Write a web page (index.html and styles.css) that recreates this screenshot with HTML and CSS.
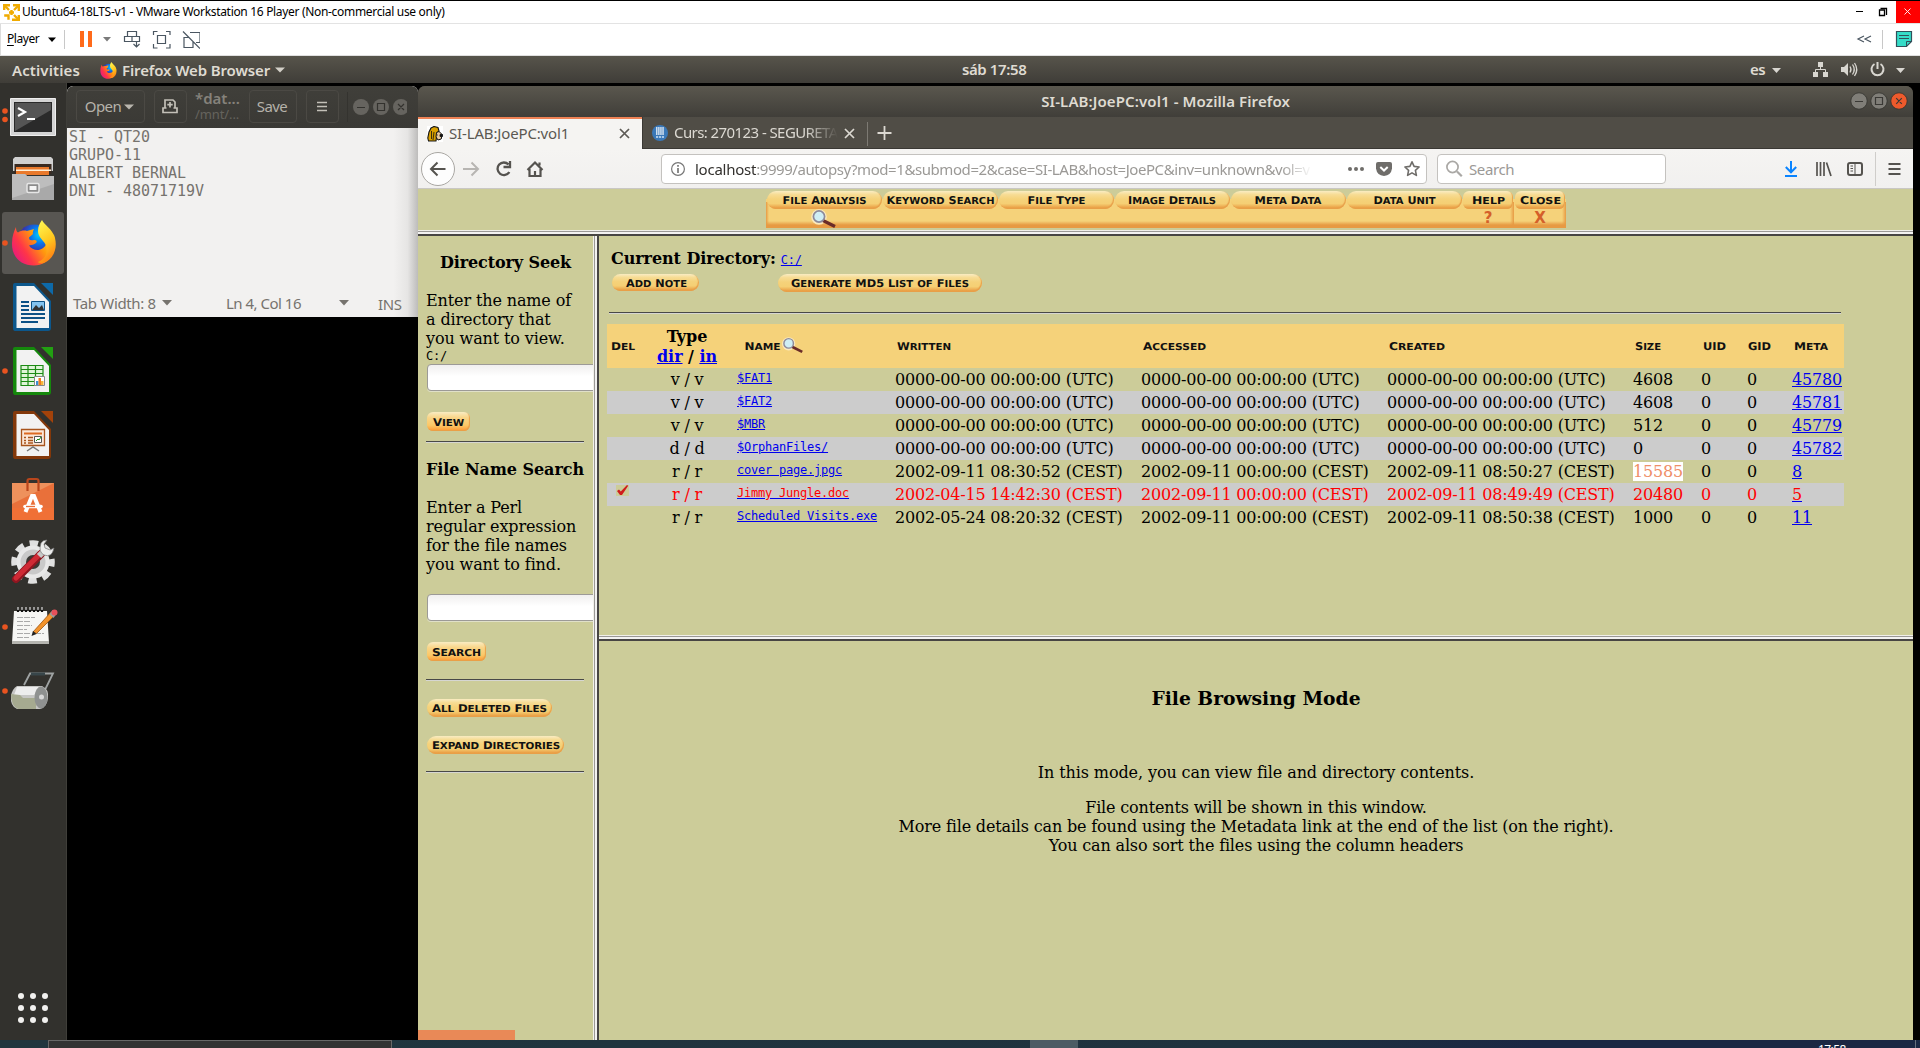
FILE: index.html
```html
<!DOCTYPE html>
<html lang="en">
<head>
<meta charset="utf-8">
<title>Ubuntu64-18LTS-v1 - VMware Workstation 16 Player</title>
<link rel="stylesheet" href="styles.css">
</head>
<body>
<div class="host">
  <header class="vm-title">
    <svg class="vm-logo" width="17" height="17" viewBox="0 0 17 17"><g fill="none" stroke="#f0ab00" stroke-width="2.4"><path d="M1.2 6V1.2H7M10 1.2h5.8V7M15.800 11v4.800H9M5.500 15.800V11.500H1.200"/><path d="M2 2l4 4M15 2l-4 4M15 15l-4-4"/><path d="M6 8.500h2.500V6M11 8.500H8.500V11"/></g></svg>
    <span class="vm-name">Ubuntu64-18LTS-v1 - VMware Workstation 16 Player (Non-commercial use only)</span>
    <span class="vm-controls">
      <svg width="64" height="22" viewBox="-8 0 64 22"><path d="M16 10.500h7" stroke="#000"/><path d="M39.500 9h5v5.500h-5z" fill="none" stroke="#000" stroke-width="1.300"/><path d="M40.500 7.500h6V14" fill="none" stroke="#000" stroke-width="1.300"/></svg>
      <svg class="vm-close" width="24" height="22" viewBox="0 0 24 22"><path d="M8.500 7.500l6 6M14.500 7.500l-6 6" stroke="#fff" stroke-width=".9"/></svg>
    </span>
  </header>
  <div class="vm-bar">
    <span class="vm-player"><u>P</u>layer</span>
    <svg width="152" height="32" viewBox="0 0 152 32">
      <path d="M0 13.500h8l-4 4.500z" fill="#000"/><path d="M16.500 6v19" stroke="#c8c8c8"/>
      <path d="M32 7h4v16h-4zM40 7h4v16h-4z" fill="#ff6a1a"/><path d="M55 13h8l-4 4.500z" fill="#7a7a7a"/>
      <g fill="none" stroke="#4a5661" stroke-width="1.200"><path d="M79.500 7.500h9v5h-9zM76.500 12.500h15v5h-15zM84 12.500v5M88.500 17v6M85.500 20l3 3 3-3"/><path d="M105.500 11V7.500h4M118 7.500h4V11M122 20v4h-4M109.500 24h-4v-4M109.500 11.500h8v8h-8z" /><path d="M142 8.500h10v10h-4M141 13.500h-5v10h9v-6M135 7.500l17 17"/></g>
    </svg>
    <svg class="vm-right" width="70" height="32" viewBox="0 0 70 32"><path d="M14 12l-6 3 6 3M21 12l-6 3 6 3" fill="none" stroke="#4a5661" stroke-width="1.200"/><path d="M32.500 6v19" stroke="#c8c8c8"/><path d="M46.500 7.500h15v10l-5 5h-10z" fill="#35dcc8" stroke="#31505a" stroke-width="1.200"/><path d="M56.500 22.500v-5h5M49 11.500h10M49 14.500h10" fill="none" stroke="#31505a"/></svg>
  </div>

  <div class="panel">
    <div class="panel-left">
      <span class="activities">Activities</span>
      <svg width="17" height="17" viewBox="0 0 46 46"><use href="#fox"/></svg>
      <span class="app-name">Firefox Web Browser</span>
      <svg width="10" height="6" viewBox="0 0 10 6"><path d="M0 .5h10L5 5.500z" fill="#d3d0c8"/></svg>
    </div>
    <span class="clock">sáb 17:58</span>
    <div class="panel-right">
      <span class="lang">es</span>
      <svg width="153" height="28" viewBox="0 0 153 28">
        <g fill="#d8d6d0"><path d="M5 12h9l-4.500 5zM129 12h9l-4.500 5z"/><path d="M51 6h5v5h-5zM46 16h5v5h-5zM56 16h5v5h-5z"/><path d="M74 11h3l4-4v13l-4-4h-3z"/></g>
        <g fill="none" stroke="#d8d6d0"><path d="M53.500 11v3M48.500 16v-2.500h10V16"/><path d="M83 10.500q2 3 0 6M85.500 8.500q3.500 5 0 10M87.500 7q4.500 6.500 0 13" stroke-width="1.300"/><path d="M107.500 8a6 6 0 1 0 6 0M110.500 6v7" stroke-width="2"/></g>
      </svg>
    </div>
  </div>

  <main class="desktop">
    <nav class="dock">
      <svg width="67" height="64" viewBox="0 85 67 64"><g fill="#e95420"><circle cx="5" cy="111" r="2.800"/><circle cx="5" cy="119.500" r="2.800"/></g><path d="M10.500 98.500h45v37h-45z" fill="#d4d4d4" stroke="#efefef"/><path d="M14 102h38v30H14z" fill="#2a2a2a"/><path d="M15 103h36v7L15 131z" fill="#555"/><path d="M18 108l7 4-7 4" fill="none" stroke="#fff" stroke-width="2.200"/><path d="M27 119h8" stroke="#fff" stroke-width="2"/></svg>
      <svg width="67" height="62" viewBox="0 149 67 62"><path d="M13 159l2-2h36l2 2v12H13z" fill="#d0d0d0"/><path d="M14.500 164h37v10h-37z" fill="#3a2a20"/><path d="M16 167h33v8H16z" fill="#e9792b"/><path d="M16 169.500h35v1.600H16z" fill="#fff0d8"/><path d="M12 174h13l2 2h27v24H12z" fill="#a9a9a9"/><path d="M12 174h13l2 2h27v8L12 198z" fill="#bdbdbd"/><rect x="27" y="183.500" width="12" height="9" rx="1.500" fill="#8b8b8b" stroke="#e6e6e6" stroke-width="1.500"/><path d="M29.500 186h7v4h-7z" fill="#f5f5f5"/></svg>
      <svg width="67" height="64" viewBox="0 211 67 64"><rect x="2" y="212" width="62" height="62" rx="3" fill="#585652"/><circle cx="5" cy="243" r="2.800" fill="#e95420"/>
        <defs>
          <linearGradient id="fx" x1="0" y1=".8" x2="1" y2=".2"><stop offset="0" stop-color="#e31587"/><stop offset=".3" stop-color="#ff3647"/><stop offset=".62" stop-color="#ff980e"/><stop offset="1" stop-color="#ffe226"/></linearGradient>
          <radialGradient id="fg" cx=".65" cy=".3"><stop offset="0" stop-color="#00ccff"/><stop offset=".5" stop-color="#0a74e8"/><stop offset="1" stop-color="#3a2ea8"/></radialGradient>
          <linearGradient id="fy" x1=".3" y1="0" x2=".6" y2="1"><stop offset="0" stop-color="#fff44f"/><stop offset=".5" stop-color="#ffc81f"/><stop offset="1" stop-color="#ff7a12"/></linearGradient>
          <g id="fox"><circle cx="23" cy="22" r="17.500" fill="url(#fg)"/><path d="M5 7c0 3 .5 4.500 2 5.500 3-2 6-2.500 9-1.500l7-2c-1 2-1.500 3.500-1 5l-4 3.500c0 3 2 3 5 2.500 2.500-.5 3.500 1.500 2 3-2 2-4 1.500-7 2.500 4 6 14 7 18-3 2 0 4-6 7-8 3 18-6 31-20 31S.5 36 1 23C1.200 16 3 11 5 7z" fill="url(#fx)"/><path d="M31 0c2 5 10 8 13 18 3 12-3 22-11 25-4 1-6-1-6-1 8-3 10-10 8-16-1-5-8-8-8-15 0-5 2-8 4-11z" fill="url(#fy)"/></g>
        </defs>
        <g transform="translate(11 220)"><use href="#fox"/></g></svg>
      <svg width="67" height="64" viewBox="0 275 67 64"><path d="M15 283h19l17 18v27q0 3-3 3H15q-2 0-2-3v-43q0-2 2-2z" fill="#0c578c"/><path d="M16.500 286H34l15 16v26H16.500z" fill="#f2f2f2"/><path d="M41 283h12v12z" fill="#0e69a8"/><path d="M21 302h8M21 306h8M21 310h8M21 314h24M21 318h24M21 322h17" stroke="#0c5186" stroke-width="1.800"/><path d="M31.500 301.500h13v9h-13z" fill="#83c3ef" stroke="#0c5186"/><path d="M32 310l4-5 3 3 3-3 2 5z" fill="#333"/></svg>
      <svg width="67" height="64" viewBox="0 339 67 64"><circle cx="5" cy="371" r="2.800" fill="#e95420"/><path d="M15 347h19l17 18v27q0 3-3 3H15q-2 0-2-3v-43q0-2 2-2z" fill="#15880c"/><path d="M16.500 350H34l15 16v26H16.500z" fill="#f2f2f2"/><path d="M41 347h12v12z" fill="#22a012"/><path d="M21 365.500h22v20H21z" fill="#dff5d8" stroke="#1c8b14" stroke-width="1.200"/><path d="M21 369.500h22M21 373.500h22M21 377.500h22M21 381.500h22M28 365v20M35.500 365v20" stroke="#1c8b14" stroke-width="1.200"/><path d="M34.500 376.500h10v9h-10z" fill="#fff" stroke="#888"/><path d="M36 381h2.500v4H36z" fill="#3b8fd0"/><path d="M38.500 378h2.500v7h-2.500z" fill="#f07c1c"/><path d="M41 381h2.500v4H41z" fill="#f6b73c"/></svg>
      <svg width="67" height="64" viewBox="0 403 67 64"><path d="M15 411h19l17 18v27q0 3-3 3H15q-2 0-2-3v-43q0-2 2-2z" fill="#83380a"/><path d="M16.500 414H34l15 16v26H16.500z" fill="#f2f2f2"/><path d="M41 411h12v12z" fill="#a3420a"/><path d="M21.500 429.500h23v16h-23z" fill="#fbe7d8" stroke="#a8541c" stroke-width="1.300"/><path d="M24 433.500h18" stroke="#dc6a22" stroke-width="2"/><path d="M24 437.500h2M24 440.500h2M24 443h2M28 437.500h5M28 440.500h5M28 443h5" stroke="#a8541c" stroke-width="1.500"/><path d="M34.500 436.500h7v6h-7z" fill="#fff" stroke="#555"/><path d="M36 441l2-2 1 1 2-3" fill="none" stroke="#1c8b14"/><path d="M27 451l6-4 6 4" fill="none" stroke="#777" stroke-width="1.500"/></svg>
      <svg width="67" height="64" viewBox="0 467 67 64"><path d="M12 483h42v37H12z" fill="#e9703a"/><path d="M12 483h42l-42 21z" fill="#ee915c"/><path d="M12 508h42v12H12z" fill="#f07036"/><path d="M27.500 491v-10q0-2 2-2h7q2 0 2 2v10" fill="none" stroke="#b9461c" stroke-width="2.200"/><path d="M25.500 512l6.500-16h2l6.500 16" fill="none" stroke="#fff" stroke-width="4"/><path d="M25 506.500h16" stroke="#fff" stroke-width="3.600" stroke-linecap="round"/><path d="M26 506.500h9" stroke="#e9703a" stroke-width="1.300"/></svg>
      <svg width="67" height="64" viewBox="0 531 67 64"><circle cx="33" cy="562" r="15.500" fill="#c9c9c9"/><circle cx="33" cy="562" r="18.800" fill="none" stroke="#e0e0e0" stroke-width="6" stroke-dasharray="8.500 6.270" stroke-dashoffset="4"/><circle cx="33" cy="562" r="14.500" fill="none" stroke="#e8e8e8" stroke-width="4"/><circle cx="33" cy="562" r="7" fill="#3a3935"/><path d="M16 579l25-25" stroke="#8e1620" stroke-width="8" stroke-linecap="round"/><path d="M16 578l24-24" stroke="#cf2a35" stroke-width="5" stroke-linecap="round"/><path d="M39 556l6-6" stroke="#c8c8c8" stroke-width="6"/><path d="M41 543q-3 9 3 12 8 3 10-7l-4 2-5-2-1-4 3-4q-4 0-6 3z" fill="#ececec" stroke="#777" stroke-width=".7"/></svg>
      <svg width="67" height="64" viewBox="0 595 67 64"><circle cx="5" cy="627" r="2.800" fill="#e95420"/><path d="M14 611h33l2 32H12z" fill="#f6f6f4"/><path d="M12 641h37v3H12z" fill="#b5b5b0"/><path d="M18 612v-3M22 612v-3M26 612v-3M30 612v-3M34 612v-3M38 612v-3M42 612v-3" stroke="#111" stroke-width="2.200"/><path d="M18 610v-3M22 610v-3M26 610v-3M30 610v-3M34 610v-3M38 610v-3M42 610v-3" stroke="#ddd" stroke-width="1.200"/><path d="M17 617.500h18M17 621.500h14M17 625.500h15M17 629.500h10M17 633.500h14M35 633.500h9M17 637.500h12" stroke="#a9a9a9" stroke-dasharray="6 1"/><path d="M33 632l18-20 3.500 3.500-18 18z" fill="#f2932c" stroke="#9c5410" stroke-width=".8"/><path d="M31.500 636l1.500-5 3.500 3z" fill="#222"/><path d="M49.500 614l3-4 4 4-3 4z" fill="#9b9b9b"/><circle cx="54.500" cy="612.500" r="3" fill="#e8505a"/></svg>
      <svg width="67" height="64" viewBox="0 659 67 64"><circle cx="5" cy="691" r="2.800" fill="#e95420"/><path d="M24 685l6-11.500h23L42 696" fill="none" stroke="#9fa3a3" stroke-width="1.800"/><path d="M31 674h14" stroke="#38464a" stroke-width="3"/><path d="M17 686h25q7 3 6 12t-8 11H17q-7-3-6-13 1-7 6-10z" fill="#c6c6c4"/><path d="M17 687h24l-7 8H14z" fill="#ededed"/><path d="M11 694l9 1 3 3h13v11H18q-7-3-7-15z" fill="#a6aa90"/><ellipse cx="41" cy="697.500" rx="6.500" ry="11" fill="#8f9190"/><circle cx="41.500" cy="697" r="2.500" fill="#d8d8d8"/></svg>
      <svg class="apps" width="67" height="40" viewBox="0 988 67 40"><g fill="#f2f1ef"><circle cx="21" cy="996" r="3"/><circle cx="33" cy="996" r="3"/><circle cx="45" cy="996" r="3"/><circle cx="21" cy="1008" r="3"/><circle cx="33" cy="1008" r="3"/><circle cx="45" cy="1008" r="3"/><circle cx="21" cy="1020" r="3"/><circle cx="33" cy="1020" r="3"/><circle cx="45" cy="1020" r="3"/></g></svg>
    </nav>

    <section class="gedit">
      <header class="gedit-head">
        <span class="gbtn g-open"><span>Open</span> <svg width="10" height="6" viewBox="0 0 10 6"><path d="M0 .5h10L5 5.500z" fill="#b9b6ae"/></svg></span>
        <span class="gbtn g-new"><svg width="16" height="15" viewBox="0 0 16 15"><g fill="none" stroke="#c3c0b8" stroke-width="1.700"><path d="M3 9V1h8l2 2v6M4.500 9H1v4.500h14V9h-3.500M8 3v5.500M5.300 5.700h5.400"/></g></svg></span>
        <span class="g-title"><b>*dat...</b><small>/mnt/...</small></span>
        <span class="gbtn g-save"><span>Save</span></span>
        <span class="gbtn g-menu"><svg width="10" height="11" viewBox="0 0 10 11"><path d="M0 1.500h10M0 5.500h10M0 9.500h10" stroke="#c3c0b8" stroke-width="1.700"/></svg></span>
        <svg class="g-controls" width="62" height="34" viewBox="0 0 62 34"><path d="M2.500 2v30" stroke="#34332f"/><g fill="#66645f"><circle cx="16" cy="17" r="8"/><circle cx="36" cy="17" r="8"/><circle cx="56" cy="17" r="8"/></g><path d="M12 17.500h8M32.500 13.500h7v7h-7zM53 14l6 6M59 14l-6 6" fill="none" stroke="#33322e" stroke-width="1.200"/></svg>
      </header>
      <pre class="gedit-text">SI - QT20
GRUPO-11
ALBERT BERNAL
DNI - 48071719V</pre>
      <footer class="gedit-status">
        <span class="s-tab">Tab Width: 8</span>
        <svg class="s-a1" width="10" height="6" viewBox="0 0 10 6"><path d="M0 0h10L5 5.500z" fill="#76736e"/></svg>
        <span class="s-ln">Ln 4, Col 16</span>
        <svg class="s-a2" width="10" height="6" viewBox="0 0 10 6"><path d="M0 0h10L5 5.500z" fill="#76736e"/></svg>
        <span class="s-ins">INS</span>
      </footer>
    </section>

    <section class="firefox">
      <header class="ff-title"><span>SI-LAB:JoePC:vol1 - Mozilla Firefox</span>
        <svg class="ff-controls" width="62" height="20" viewBox="0 0 62 20"><g fill="#807e78" stroke="#34332f" stroke-width=".8"><circle cx="10" cy="10" r="8.200"/><circle cx="30" cy="10" r="8.200"/><circle cx="50" cy="10" r="8.200" fill="#ee5a2c"/></g><path d="M6 10.500h8M26.500 6.500h7v7h-7zM47.200 7.200l5.600 5.600M52.800 7.200l-5.600 5.600" fill="none" stroke="#3a3935" stroke-width="1.200"/></svg>
      </header>
      <div class="ff-tabs">
        <div class="tab active">
          <svg width="16" height="16" viewBox="0 0 16 16"><path d="M0 0h16v16H0z" fill="#fff"/><path d="M4 2l3-1.500 4 1L12 5l-2 2-1 8H1.500L.8 12 2 6z" fill="#d9a000" stroke="#111" stroke-width="1.100"/><path d="M9.500 6.500L12 5.500l3.200 3-1 4.500-3.200 1-2-3z" fill="#e8c9a0" stroke="#111"/><path d="M4.500 5v8M7 6l-1 8M10 9h.8M13 8.500h2.500v2H13z" fill="#111" stroke="#111" stroke-width=".8"/></svg>
          <span class="tab-label">SI-LAB:JoePC:vol1</span>
          <svg width="11" height="11" viewBox="0 0 11 11"><path d="M1 1l9 9M10 1l-9 9" stroke="#5d5a55" stroke-width="1.700"/></svg>
        </div>
        <div class="tab other">
          <svg width="16" height="16" viewBox="0 0 16 16"><circle cx="8" cy="8" r="8" fill="#3a78b8"/><path d="M4 3h8M4 5h8M4 7h8M4 9h8" stroke="#fff" stroke-width="1.500" stroke-dasharray="1.500 .6"/><path d="M4 12h8" stroke="#a8c8e8" stroke-width="2" stroke-dasharray="2.200 .8"/></svg>
          <span class="tab-label">Curs: 270123 - SEGURETA</span>
          <svg width="11" height="11" viewBox="0 0 11 11"><path d="M1 1l9 9M10 1l-9 9" stroke="#dcd9d2" stroke-width="1.700"/></svg>
        </div>
        <svg class="tab-new" width="40" height="32" viewBox="0 0 40 32"><path d="M6.500 5v24" stroke="#7d7a73"/><path d="M23.500 9v14M16.500 16h14" stroke="#dcd9d2" stroke-width="1.800"/></svg>
      </div>
      <div class="ff-bar">
        <svg class="ff-nav" width="143" height="40" viewBox="0 0 143 40"><circle cx="20" cy="20" r="16.500" fill="#fdfdfd" stroke="#a9a7a3"/><g fill="none" stroke-width="2"><path d="M27.500 20H13M19.500 13.500L13 20l6.500 6.500" stroke="#55534f"/><path d="M45 20h15M53.500 13.500L60 20l-6.500 6.500" stroke="#b7b5b2"/><path d="M90.500 15.500a6.300 6.300 0 1 0 .8 7.500M92 12v6h-6.500" stroke="#55534f" stroke-width="2.300"/><path d="M109.500 21l7.500-7.500 7.500 7.500M111.500 20v7h11v-7M117 22v5M121.500 13.500v3" stroke="#55534f" stroke-width="2.200"/></g></svg>
        <div class="url">
          <svg width="14" height="14" viewBox="0 0 14 14"><circle cx="7" cy="7" r="6.400" fill="none" stroke="#777" stroke-width="1.200"/><path d="M7 6v5M7 3v1.700" stroke="#777" stroke-width="1.700"/></svg>
          <span class="url-text"><b>localhost</b><i>:9999/autopsy?mod=1&amp;submod=2&amp;case=SI-LAB&amp;host=JoePC&amp;inv=unknown&amp;vol=v</i></span>
          <svg class="url-icons" width="78" height="20" viewBox="0 0 78 20"><g fill="#6f6d6a"><circle cx="6" cy="10" r="2"/><circle cx="12" cy="10" r="2"/><circle cx="18" cy="10" r="2"/><path d="M34 3h12q2 0 2 2v4.500q-1 7-8 7.500-7-.5-8-7.500V5q0-2 2-2z"/></g><path d="M36.300 8l3.700 3.500L43.700 8" fill="none" stroke="#fff" stroke-width="2"/><path d="M68 2.800l2.100 4.600 5 .6-3.700 3.400 1 5-4.400-2.500-4.400 2.500 1-5L60.900 8l5-.6z" fill="none" stroke="#6f6d6a" stroke-width="1.600" stroke-linejoin="round"/></svg>
        </div>
        <div class="search"><svg width="18" height="18" viewBox="0 0 18 18"><path d="M12 11.500l4.800 4.800" stroke="#aaa8a5" stroke-width="2.200"/><circle cx="7.500" cy="7" r="5.600" fill="none" stroke="#aaa8a5" stroke-width="1.700"/></svg><span>Search</span></div>
        <svg class="ff-tools" width="130" height="40" viewBox="0 0 130 40"><path d="M8 12v11M2.800 18l5.200 5.300 5.200-5.300M2 27h12" fill="none" stroke="#0a84ff" stroke-width="2"/><path d="M34 13v14M37.500 13v14M41 13v14M43.500 13.500L48 27" fill="none" stroke="#55534f" stroke-width="1.700"/><rect x="65" y="14" width="14" height="12" rx="2" fill="none" stroke="#55534f" stroke-width="2"/><path d="M72 14v12M67.500 17h2.500M67.500 19.500h2.500M67.500 22h2.500" stroke="#55534f"/><path d="M92.500 3v34" stroke="#cfcdca"/><path d="M105.500 15h12M105.500 20h12M105.500 25h12" stroke="#55534f" stroke-width="1.900"/></svg>
      </div>

      <div class="page">
        <div class="top-frame">
          <div class="mode-bar">
            <div class="mode"><svg class="pill" width="115" height="18"><text x="15.500" y="13" textLength="84" lengthAdjust="spacingAndGlyphs">F<tspan>ILE</tspan> A<tspan>NALYSIS</tspan></text></svg><svg class="glass" width="28" height="19" viewBox="0 0 28 19"><use href="#lens"/></svg></div>
            <div class="mode"><svg class="pill" width="115" height="18"><text x="3.500" y="13" textLength="108" lengthAdjust="spacingAndGlyphs">K<tspan>EYWORD</tspan> S<tspan>EARCH</tspan></text></svg></div>
            <div class="mode"><svg class="pill" width="115" height="18"><text x="28.500" y="13" textLength="58" lengthAdjust="spacingAndGlyphs">F<tspan>ILE</tspan> T<tspan>YPE</tspan></text></svg></div>
            <div class="mode"><svg class="pill" width="115" height="18"><text x="13" y="13" textLength="88" lengthAdjust="spacingAndGlyphs">I<tspan>MAGE</tspan> D<tspan>ETAILS</tspan></text></svg></div>
            <div class="mode"><svg class="pill" width="115" height="18"><text x="23.500" y="13" textLength="67" lengthAdjust="spacingAndGlyphs">M<tspan>ETA</tspan> D<tspan>ATA</tspan></text></svg></div>
            <div class="mode"><svg class="pill" width="115" height="18"><text x="26.500" y="13" textLength="62" lengthAdjust="spacingAndGlyphs">D<tspan>ATA</tspan> U<tspan>NIT</tspan></text></svg></div>
            <div class="mode small"><svg class="pill" width="50" height="18"><text x="9" y="13" textLength="33" lengthAdjust="spacingAndGlyphs">H<tspan>ELP</tspan></text></svg><b>?</b></div>
            <div class="mode small"><svg class="pill" width="50" height="18"><text x="5" y="13" textLength="41" lengthAdjust="spacingAndGlyphs">C<tspan>LOSE</tspan></text></svg><b>X</b></div>
          </div>
        </div>
        <div class="split-h"></div>
        <div class="frames">
          <aside class="left-frame">
            <h4 class="seek">Directory Seek</h4>
            <p class="seek-text">Enter the name of<br>a directory that<br>you want to view.</p>
            <div class="mono prefix">C:/</div>
            <div class="field first"></div>
            <svg class="pill hot view" width="43" height="19"><text x="6" y="14" textLength="31" lengthAdjust="spacingAndGlyphs">V<tspan>IEW</tspan></text></svg>
            <div class="rule"></div>
            <h4 class="fns">File Name Search</h4>
            <p class="fns-text">Enter a Perl<br>regular expression<br>for the file names<br>you want to find.</p>
            <div class="field second"></div>
            <svg class="pill hot view" width="59" height="19"><text x="5" y="14" textLength="49" lengthAdjust="spacingAndGlyphs">S<tspan>EARCH</tspan></text></svg>
            <div class="rule r2"></div>
            <svg class="pill del" width="125" height="18"><text x="5" y="13" textLength="115" lengthAdjust="spacingAndGlyphs">A<tspan>LL</tspan> D<tspan>ELETED</tspan> F<tspan>ILES</tspan></text></svg>
            <svg class="pill exp" width="137" height="18"><text x="5" y="13" textLength="128" lengthAdjust="spacingAndGlyphs">E<tspan>XPAND</tspan> D<tspan>IRECTORIES</tspan></text></svg>
            <div class="rule r3"></div>
          </aside>
          <div class="split-v"></div>
          <div class="right">
            <div class="file-frame">
              <div class="cur"><b>Current Directory:</b> <a class="mono">C:/</a></div>
              <div class="acts"><svg class="pill" width="87" height="17"><text x="14" y="13" textLength="61" lengthAdjust="spacingAndGlyphs">A<tspan>DD</tspan> N<tspan>OTE</tspan></text></svg><svg class="pill" width="204" height="18"><text x="13" y="13" textLength="178" lengthAdjust="spacingAndGlyphs">G<tspan>ENERATE</tspan> MD5 L<tspan>IST</tspan> <tspan>OF</tspan> F<tspan>ILES</tspan></text></svg></div>
              <div class="rule wide"></div>
              <div class="table">
                <div class="tr th"><span class="d"><svg width="30" height="14"><text x="2" y="11" textLength="24" lengthAdjust="spacingAndGlyphs">D<tspan>EL</tspan></text></svg></span><span class="t"><b>Type<br><a>dir</a> / <a>in</a></b></span><span class="n"><svg width="70" height="22"><text x="7.500" y="15" textLength="36" lengthAdjust="spacingAndGlyphs">N<tspan>AME</tspan></text><g transform="translate(44 2) scale(.85)"><g id="lens"><circle cx="9" cy="8" r="7.800" fill="#fbe9bd"/><path d="M13 11.500l12 6" stroke="#6a2c28" stroke-width="3.200"/><circle cx="9" cy="7.500" r="5.600" fill="#cfeef4" stroke="#8c8a9a" stroke-width="1.700"/></g></g></svg></span><span><svg width="60" height="14"><text x="2" y="11" textLength="54" lengthAdjust="spacingAndGlyphs">W<tspan>RITTEN</tspan></text></svg></span><span><svg width="70" height="14"><text x="2" y="11" textLength="63" lengthAdjust="spacingAndGlyphs">A<tspan>CCESSED</tspan></text></svg></span><span><svg width="64" height="14"><text x="2" y="11" textLength="56" lengthAdjust="spacingAndGlyphs">C<tspan>REATED</tspan></text></svg></span><span><svg width="34" height="14"><text x="2" y="11" textLength="26" lengthAdjust="spacingAndGlyphs">S<tspan>IZE</tspan></text></svg></span><span><svg width="32" height="14"><text x="2" y="11" textLength="23" lengthAdjust="spacingAndGlyphs">UID</text></svg></span><span><svg width="32" height="14"><text x="1" y="11" textLength="23" lengthAdjust="spacingAndGlyphs">GID</text></svg></span><span><svg width="42" height="14"><text x="2" y="11" textLength="34" lengthAdjust="spacingAndGlyphs">M<tspan>ETA</tspan></text></svg></span></div>
                <div class="tr"><span></span><span class="t">v / v</span><span><a class="mono">$FAT1</a></span><span>0000-00-00 00:00:00 (UTC)</span><span>0000-00-00 00:00:00 (UTC)</span><span>0000-00-00 00:00:00 (UTC)</span><span>4608</span><span>0</span><span>0</span><span><a>45780</a></span></div>
                <div class="tr alt"><span></span><span class="t">v / v</span><span><a class="mono">$FAT2</a></span><span>0000-00-00 00:00:00 (UTC)</span><span>0000-00-00 00:00:00 (UTC)</span><span>0000-00-00 00:00:00 (UTC)</span><span>4608</span><span>0</span><span>0</span><span><a>45781</a></span></div>
                <div class="tr"><span></span><span class="t">v / v</span><span><a class="mono">$MBR</a></span><span>0000-00-00 00:00:00 (UTC)</span><span>0000-00-00 00:00:00 (UTC)</span><span>0000-00-00 00:00:00 (UTC)</span><span>512</span><span>0</span><span>0</span><span><a>45779</a></span></div>
                <div class="tr alt"><span></span><span class="t">d / d</span><span><a class="mono">$OrphanFiles/</a></span><span>0000-00-00 00:00:00 (UTC)</span><span>0000-00-00 00:00:00 (UTC)</span><span>0000-00-00 00:00:00 (UTC)</span><span>0</span><span>0</span><span>0</span><span><a>45782</a></span></div>
                <div class="tr"><span></span><span class="t">r / r</span><span><a class="mono">cover page.jpgc</a></span><span>2002-09-11 08:30:52 (CEST)</span><span>2002-09-11 00:00:00 (CEST)</span><span>2002-09-11 08:50:27 (CEST)</span><span><mark>15585</mark></span><span>0</span><span>0</span><span><a>8</a></span></div>
                <div class="tr alt gone"><span class="d"><svg class="tick" width="13" height="11" viewBox="0 0 13 11"><path d="M0 0h13v11H0z" fill="#cccc99"/><path d="M1 6l2-1.500 1.800 2L11 0l1.200.8L6 10H4z" fill="#d01c1c"/></svg></span><span class="t">r / r</span><span><a class="mono">Jimmy Jungle.doc</a></span><span>2002-04-15 14:42:30 (CEST)</span><span>2002-09-11 00:00:00 (CEST)</span><span>2002-09-11 08:49:49 (CEST)</span><span>20480</span><span>0</span><span>0</span><span><a>5</a></span></div>
                <div class="tr"><span></span><span class="t">r / r</span><span><a class="mono">Scheduled Visits.exe</a></span><span>2002-05-24 08:20:32 (CEST)</span><span>2002-09-11 00:00:00 (CEST)</span><span>2002-09-11 08:50:38 (CEST)</span><span>1000</span><span>0</span><span>0</span><span><a>11</a></span></div>
              </div>
            </div>
            <div class="split-h"></div>
            <div class="content-frame">
              <h3>File Browsing Mode</h3>
              <p class="c1">In this mode, you can view file and directory contents.</p>
              <p class="c2">File contents will be shown in this window.<br>More file details can be found using the Metadata link at the end of the list (on the right).<br>You can also sort the files using the column headers</p>
            </div>
          </div>
        </div>
        <div class="load-hint"></div>
      </div>
    </section>
  </main>

  <footer class="taskbar"><span class="task"></span><span class="task-hi"></span><span class="task-clock">17:58</span><span class="peek"></span></footer>
</div>
</body>
</html>
```
FILE: styles.css
```css
* { box-sizing: border-box; }
body { margin: 0; width: 1920px; height: 1048px; overflow: hidden; background: #000; font-family: "Noto Sans", "Open Sans", sans-serif; }
svg { display: block; flex: none; }
p, h3, h4, pre { margin: 0; }
.host { display: flex; flex-direction: column; height: 1048px; }

/* VMware window chrome */
.vm-title { flex: none; height: 24px; background: #fff; border-top: 1px solid #000; border-bottom: 1px solid #e3e3e3; display: flex; }
.vm-logo { margin: 3px 2px 0 3px; }
.vm-name { font-size: 12px; line-height: 21px; letter-spacing: -.32px; color: #000; white-space: nowrap; }
.vm-controls { margin-left: auto; display: flex; }
.vm-close { background: #f00; }
.vm-bar { flex: none; height: 32px; background: #fff; border-bottom: 1px solid #e0e0e0; border-left: 1px solid #dcdcdc; display: flex; }
.vm-player { width: 41px; margin-left: 6px; font-size: 12px; line-height: 30px; letter-spacing: -.45px; }
.vm-player u { text-underline-offset: 2px; }
.vm-right { margin-left: auto; }

/* GNOME top panel */
.panel { flex: none; height: 27px; background: linear-gradient(#57544b, #3f3d38); color: #dfdbd2; font-size: 15px; font-weight: 600; line-height: 26px; display: grid; grid-template-columns: 962px 1fr 172px; }
.panel span { white-space: nowrap; height: 27px; }
.panel-left { display: flex; align-items: center; padding-left: 12px; }
.activities { width: 88px; letter-spacing: .1px; }
.app-name { margin: 0 5px 0 5px; letter-spacing: -.12px; }
.clock { letter-spacing: -.4px; }
.panel-right { display: flex; }
.lang { flex: none; width: 18px; margin-left: 2px; letter-spacing: -.5px; }
.panel-right svg { margin-left: -1px; }

.desktop { flex: none; position: relative; height: 957px; background: #000; }
.dock { width: 67px; height: 957px; padding-top: 2px; background: #32312d; border-right: 1px solid #3f3e39; display: flex; flex-direction: column; overflow: hidden; }
.apps { margin-top: auto; margin-bottom: 12px; }

/* Text editor window */
.gedit { position: absolute; left: 67px; top: 3px; width: 351px; height: 231px; background: linear-gradient(90deg, #f2f1f0 93%, #e6e5e4 97%, #bdbcbb); border-radius: 6px 6px 0 0; overflow: hidden; color: #76736e; display: flex; flex-direction: column; }
.gedit-head { height: 42px; background: linear-gradient(#403f3a, #3a3935); border-radius: 6px 6px 0 0; display: flex; align-items: flex-start; padding-top: 4px; padding-left: 9px; font-size: 15px; color: #b5b2aa; }
.gbtn { height: 33px; border: 1px solid #4b4944; border-radius: 4px; display: flex; align-items: center; justify-content: center; flex: none; letter-spacing: -.55px; }
.gbtn span { margin-bottom: 2px; margin-left: -2px; }
.g-open { width: 69px; gap: 3px; }
.g-new { width: 33px; margin-left: 9px; padding-right: 1px; }
.g-title { width: 62px; padding-left: 8px; display: flex; flex-direction: column; color: #85827b; }
.g-title b { font-size: 15px; font-weight: 600; line-height: 17px; }
.g-title small { font-size: 13px; line-height: 14px; color: #65635d; letter-spacing: -.1px; }
.g-save { width: 48px; }
.g-menu { width: 33px; margin-left: 9px; padding-right: 2px; }
.g-controls { margin-left: 6px; }
.gedit-text { flex: 1; padding-left: 2px; font: 15px/18px "DejaVu Sans Mono", monospace; letter-spacing: -.03px; }
.gedit-status { height: 26px; display: flex; align-items: center; font-size: 15px; line-height: 26px; white-space: nowrap; padding-bottom: 2px; }
.s-tab { width: 88px; margin-left: 6px; letter-spacing: -.35px; }
.s-a1 { margin: 0 0 1px 1px; }
.s-ln { width: 80px; margin-left: 54px; letter-spacing: -.5px; }
.s-a2 { margin: 0 0 1px 33px; }
.s-ins { margin-left: 29px; letter-spacing: -.4px; padding-top: 1px; }

/* Firefox window */
.firefox { position: absolute; left: 418px; top: 3px; width: 1495px; height: 954px; display: flex; flex-direction: column; border-radius: 7px 7px 0 0; overflow: hidden; background: #4f4c45; }
.ff-title { height: 31px; flex: none; background: linear-gradient(#5a574e, #403e39); display: flex; align-items: center; justify-content: flex-end; color: #dfdbd2; font-size: 15px; font-weight: 600; }
.ff-title span { margin-right: 559px; letter-spacing: .1px; line-height: 28px; padding-bottom: 2px; white-space: nowrap; }
.ff-controls { margin: 0 2px 1px 0; }
.ff-tabs { height: 32px; flex: none; display: flex; background: #504d46; font-size: 15px; box-shadow: inset 0 -1px #3a3834; }
.tab { display: flex; align-items: center; white-space: nowrap; }
.active { width: 224px; background: #f5f4f2; border-top: 2px solid #ef8255; color: #5b5852; padding: 0 12px 1px 9px; }
.tab-label { flex: 1; margin-left: 6px; letter-spacing: -.15px; padding-bottom: 2px; }
.other { width: 226px; color: #dcd9d2; padding: 1px 13px 0 9px; border-left: 1px solid #3a3834; border-bottom: 1px solid #3a3834; }
.other .tab-label { letter-spacing: -.58px; overflow: hidden; -webkit-mask-image: linear-gradient(90deg, #000 80%, transparent); mask-image: linear-gradient(90deg, #000 80%, transparent); margin-right: 6px; }
.tab-new { flex: none; margin-left: -7px; }
.ff-bar { height: 40px; flex: none; background: linear-gradient(#f5f4f2, #f1f0ef); border-bottom: 1px solid #c9c7c4; display: flex; align-items: center; font-size: 15px; }
.url { width: 766px; height: 30px; margin-left: 100px; background: #fff; border: 1px solid #c4c2bf; border-radius: 4px; display: flex; align-items: center; padding-left: 9px; }
.url-text { width: 630px; margin-left: 10px; white-space: nowrap; overflow: hidden; line-height: 28px; -webkit-mask-image: linear-gradient(90deg, #000 93%, transparent 98%); mask-image: linear-gradient(90deg, #000 93%, transparent 98%); }
.url-text b { font-weight: 400; color: #33312e; letter-spacing: -.25px; }
.url-text i { font-style: normal; color: #9b9996; letter-spacing: -.43px; }
.url-icons { margin-left: 19px; }
.search { width: 229px; height: 30px; margin-left: 10px; background: #fff; border: 1px solid #c4c2bf; border-radius: 4px; display: flex; align-items: center; padding-left: 7px; color: #9b9996; letter-spacing: -.4px; }
.search span { margin-left: 6px; }
.ff-tools { margin-left: 117px; }

/* Autopsy page */
.page { flex: 1; position: relative; background: #cccc99; color: #000; font: 16px/19px "DejaVu Serif", serif; display: flex; flex-direction: column; min-height: 0; }
.top-frame { height: 41px; flex: none; padding: 1px 0 0 348px; }
.mode-bar { width: 800px; height: 38px; display: flex; }
.mode { width: 116px; height: 38px; padding-top: 1px; background: linear-gradient(#cccc99 9px, #f5d27a 9px, #f5d27a 31px, #e79a43 35px, #e79a43); display: flex; flex-direction: column; align-items: center; }
.mode:first-child { background: linear-gradient(90deg, #e79a43, transparent 3px) 0 12px no-repeat, linear-gradient(#cccc99 9px, #f5d27a 9px, #f5d27a 31px, #e79a43 35px, #e79a43); }
.mode.small { width: 52px; background: linear-gradient(270deg, #e79a43, transparent 4px) 0 12px no-repeat, linear-gradient(#cccc99 9px, #f5d27a 9px, #f5d27a 31px, #e79a43 35px, #e79a43); }
.mode b { font: bold 15px/17px "DejaVu Sans", sans-serif; color: #d4602a; margin-top: 1px; }
.pill { border-radius: 9px; background: linear-gradient(#f9ecc2, #f7dc94 20%, #f5d27a 45%, #f5cf74 70%, #e79238); box-shadow: inset -1px -1px 1px #e8a04a; overflow: hidden; }
.small .pill { border-radius: 6px; }
.hot { border-radius: 6px; background: linear-gradient(#f9ecc2, #f9d588 30%, #fbc867 70%, #ff9630); }
svg text { font: bold 10.8px "DejaVu Sans", sans-serif; fill: #111; text-rendering: geometricPrecision; }
svg tspan { font-size: 9.6px; }
.glass { margin-left: -1px; }
.split-h { height: 6px; flex: none; background: linear-gradient(#f0efea 1px, #9a9896 1px, #9a9896 2px, #f2f1f0 2px, #f2f1f0 4px, #474543 4px); }
.split-v { width: 6px; flex: none; background: linear-gradient(90deg, #f0efea 1px, #9a9896 1px, #9a9896 2px, #f2f1f0 2px, #f2f1f0 4px, #474543 4px); }
.frames { flex: 1; display: flex; min-height: 0; }
.left-frame { width: 175px; flex: none; padding-left: 8px; overflow: hidden; letter-spacing: -.12px; white-space: nowrap; }
.seek { width: 159px; margin-top: 17px; font-size: 16px; text-align: center; }
.seek-text { margin-top: 19px; }
.mono { font: 12px/15px "DejaVu Sans Mono", monospace; letter-spacing: -.22px; }
.prefix { padding-top: 1px; height: 16px; }
.field { width: 200px; height: 27px; margin: 0 0 0 1px; border: 1px solid #9c9a97; border-radius: 4px; background: linear-gradient(#f0efef, #fff 45%); box-shadow: 0 1px #e0e0c8; }
.view { margin: 21px 0 0 1px; }
.rule { width: 158px; height: 2px; margin-top: 10px; background: linear-gradient(#484848 1px, #d6d6d2 1px); }
.fns { margin-top: 17px; font-size: 16px; letter-spacing: -.05px; }
.fns-text { margin-top: 19px; }
.second { margin-top: 20px; }
.r2 { margin-top: 18px; }
.del { margin: 18px 0 0 1px; }
.exp { margin: 19px 0 0 1px; }
.r3 { margin-top: 17px; }
.right { flex: 1; display: flex; flex-direction: column; min-width: 0; }
.file-frame { height: 399px; flex: none; padding: 13px 0 0 8px; }
.cur { margin-left: 4px; height: 19px; line-height: 19px; white-space: nowrap; }
.cur b { letter-spacing: -.07px; }
a { color: #0000ee; text-decoration: underline; }
.acts { display: flex; gap: 79px; margin: 6px 0 0 5px; height: 18px; }
.wide { width: 1232px; margin: 20px 0 0 2px; }
.table { width: 1237px; margin-top: 10px; letter-spacing: -.18px; }
.tr { display: grid; grid-template-columns: 32px 96px 158px 246px 246px 246px 68px 46px 45px 54px; height: 23px; line-height: 19px; padding-top: 2px; white-space: nowrap; }
.tr > span { padding-left: 2px; }
.tr > .t { text-align: center; padding: 0; }
.th { height: 44px; padding-top: 0; background: #f5d27a; align-items: center; letter-spacing: -.05px; line-height: 20px; }
.tr.th > .t { padding-top: 1px; }
.alt { background: #cccccc; }
.tr .mono { display: inline-block; line-height: 15px; vertical-align: top; margin-top: 1px; }
.tick { margin: 0 0 0 7px; }
.gone, .gone a { color: #f00; }
.gone a { text-decoration-color: #0000ee; }
mark { display: inline-block; height: 19px; background: #fff; color: #ef8e68; }
.content-frame { flex: 1; text-align: center; letter-spacing: -.16px; }
.c1 { letter-spacing: -.1px; }
h3 { margin-top: 46px; font-size: 18.72px; line-height: 22px; letter-spacing: 0; }
.c1 { margin-top: 54px; }
.c2 { margin-top: 16px; }
.load-hint { position: absolute; left: 0; bottom: 0; width: 97px; height: 10px; background: #e98957; }

/* Host taskbar */
.taskbar { flex: none; height: 8px; background: linear-gradient(90deg, #21363e, #1f323e 65%, #1b2743 80%); display: flex; overflow: hidden; }
.task { width: 344px; margin-left: 48px; background: #333; border: 1px solid #686868; border-bottom: 0; }
.task-hi { width: 48px; margin-left: 638px; background: #4c5c64; }
.task-clock { margin: 3px 0 0 740px; width: 97px; color: #fff; font-size: 12px; line-height: 14px; letter-spacing: -.6px; white-space: nowrap; }
.peek { width: 1px; background: #68707e; }
```
